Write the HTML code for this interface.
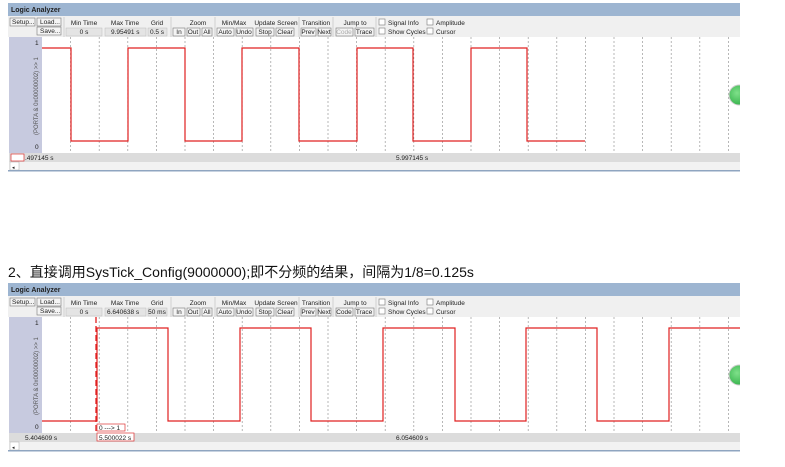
<!DOCTYPE html>
<html><head><meta charset="utf-8"><style>
body{margin:0;background:#fff;width:785px;height:467px;overflow:hidden}
svg{position:absolute;left:0;top:0}
text{font-family:"Liberation Sans",sans-serif;font-size:6.5px;fill:#222}
.h{text-anchor:middle}
.cn{font-family:"Liberation Sans","Noto Sans CJK SC",sans-serif;font-size:14px;fill:#111}
</style></head><body>
<svg width="785" height="467" viewBox="0 0 785 467">
<defs>
<g id="tb">
<rect x="8" y="3" width="732" height="168" fill="#fff"/>
<rect x="8" y="3" width="732" height="13" fill="#9db5d1"/>
<text x="11" y="12" style="font-weight:bold;font-size:7px">Logic Analyzer</text>
<rect x="8" y="16" width="732" height="21" fill="#f0f0f0"/>
<g fill="#f4f4f4" stroke="#777" stroke-width="0.6">
<rect x="10" y="18" width="25" height="8"/><rect x="37" y="18" width="24" height="8"/><rect x="37" y="27" width="24" height="8"/>
<rect x="173" y="28" width="12" height="8"/><rect x="187" y="28" width="13" height="8"/><rect x="202" y="28" width="10" height="8"/>
<rect x="217" y="28" width="17" height="8"/><rect x="236" y="28" width="17" height="8"/>
<rect x="256" y="28" width="18" height="8"/><rect x="276" y="28" width="18" height="8"/>
<rect x="301" y="28" width="15" height="8"/><rect x="318" y="28" width="13" height="8"/>
<rect x="336" y="28" width="17" height="8"/><rect x="355" y="28" width="19" height="8"/>
<rect x="379" y="19" width="6" height="6" fill="#fff"/><rect x="379" y="28" width="6" height="6" fill="#fff"/>
<rect x="427" y="19" width="6" height="6" fill="#fff"/><rect x="427" y="28" width="6" height="6" fill="#fff"/>
</g>
<g fill="#e4e4e4" stroke="#bbb" stroke-width="0.5">
<rect x="66" y="28" width="36" height="8"/><rect x="105" y="28" width="41" height="8"/><rect x="148" y="28" width="19" height="8"/>
</g>
<g stroke="#bbb" stroke-width="0.6"><line x1="64" y1="17" x2="64" y2="37"/><line x1="171" y1="17" x2="171" y2="37"/><line x1="215" y1="17" x2="215" y2="37"/><line x1="299" y1="17" x2="299" y2="37"/><line x1="333" y1="17" x2="333" y2="37"/><line x1="376" y1="17" x2="376" y2="37"/></g>
<text x="12" y="24">Setup...</text><text x="40" y="24">Load...</text><text x="40" y="33">Save...</text>
<text class="h" x="84" y="25">Min Time</text><text class="h" x="125" y="25">Max Time</text><text class="h" x="157" y="25">Grid</text>
<text class="h" x="198" y="25">Zoom</text><text class="h" x="234" y="25">Min/Max</text><text class="h" x="276" y="25">Update Screen</text>
<text class="h" x="316" y="25">Transition</text><text class="h" x="355" y="25">Jump to</text>
<text class="h" x="84" y="34">0 s</text>
<text class="h" x="179" y="34">In</text><text class="h" x="193" y="34">Out</text><text class="h" x="207" y="34">All</text>
<text class="h" x="225" y="34">Auto</text><text class="h" x="244" y="34">Undo</text><text class="h" x="265" y="34">Stop</text><text class="h" x="285" y="34">Clear</text>
<text class="h" x="308" y="34">Prev</text><text class="h" x="324" y="34">Next</text><text class="h" x="364" y="34">Trace</text>
<text x="388" y="25">Signal Info</text><text x="388" y="34">Show Cycles</text><text x="436" y="25">Amplitude</text><text x="436" y="34">Cursor</text>
<rect x="9" y="37" width="33" height="116" fill="#c7cadf"/>
<text x="35" y="45">1</text><text x="35" y="149">0</text>
<text transform="translate(38,135) rotate(-90)" style="font-size:6px;fill:#555">(PORTA &amp; 0x00000002) &gt;&gt; 1</text>
<g stroke="#999" stroke-width="0.7" stroke-dasharray="2,2">
<line x1="70.6" y1="37" x2="70.6" y2="153"/><line x1="99.2" y1="37" x2="99.2" y2="153"/><line x1="127.8" y1="37" x2="127.8" y2="153"/><line x1="156.4" y1="37" x2="156.4" y2="153"/><line x1="185" y1="37" x2="185" y2="153"/><line x1="213.6" y1="37" x2="213.6" y2="153"/><line x1="242.2" y1="37" x2="242.2" y2="153"/><line x1="270.8" y1="37" x2="270.8" y2="153"/><line x1="299.4" y1="37" x2="299.4" y2="153"/><line x1="328" y1="37" x2="328" y2="153"/><line x1="356.6" y1="37" x2="356.6" y2="153"/><line x1="385.2" y1="37" x2="385.2" y2="153"/><line x1="413.8" y1="37" x2="413.8" y2="153"/><line x1="442.4" y1="37" x2="442.4" y2="153"/><line x1="471" y1="37" x2="471" y2="153"/><line x1="499.6" y1="37" x2="499.6" y2="153"/><line x1="528.2" y1="37" x2="528.2" y2="153"/><line x1="556.8" y1="37" x2="556.8" y2="153"/><line x1="585.4" y1="37" x2="585.4" y2="153"/><line x1="614" y1="37" x2="614" y2="153"/><line x1="642.6" y1="37" x2="642.6" y2="153"/><line x1="671.2" y1="37" x2="671.2" y2="153"/><line x1="699.8" y1="37" x2="699.8" y2="153"/><line x1="728.4" y1="37" x2="728.4" y2="153"/>
</g>
<rect x="9" y="153" width="731" height="9" fill="#dcdcdc"/>
<rect x="9" y="162" width="731" height="8" fill="#f2f2f2"/>
<rect x="10" y="162" width="9" height="8" fill="#fff" stroke="#aaa" stroke-width="0.5"/>
<text x="12" y="169" style="font-size:5px">◂</text>
<rect x="8" y="170" width="732" height="1.5" fill="#8fa5c0"/>
</g>
<radialGradient id="gr" cx="0.4" cy="0.4" r="0.7"><stop offset="0" stop-color="#7fe08a"/><stop offset="1" stop-color="#2fae45"/></radialGradient>
</defs>

<!-- panel 1 -->
<use href="#tb"/>
<text x="111" y="34" >9.95491 s</text><text class="h" x="157" y="34">0.5 s</text>
<text class="h" x="344" y="34" style="fill:#aaa">Code</text>
<path d="M42 48H71V141H128V48H185V141H242V48H299V141H357V48H413V141H471V48H527V141H585" fill="none" stroke="#e02020" stroke-width="1.2"/>
<rect x="11" y="154" width="13" height="7" fill="#fff" stroke="#d33" stroke-width="0.7"/>
<text x="25" y="160">.497145 s</text><text x="396" y="160">5.997145 s</text>
<circle cx="739" cy="95" r="10" fill="url(#gr)" stroke="#ccc"/>
<rect x="740" y="80" width="45" height="30" fill="#fff"/>

<text class="cn" x="8" y="277">2、直接调用SysTick_Config(9000000);即不分频的结果，间隔为1/8=0.125s</text>

<!-- panel 2 -->
<g transform="translate(0,280)">
<use href="#tb"/>
<text x="107" y="34">6.640638 s</text><text class="h" x="157" y="34">50 ms</text>
<text class="h" x="344" y="34">Code</text>
<path d="M42 141H97V48H168V141H240V48H311V141H383V48H455V141H526V48H597V141H669V48H740" fill="none" stroke="#e02020" stroke-width="1.2"/>
<line x1="96" y1="37" x2="96" y2="153" stroke="#e02020" stroke-width="1.3" stroke-dasharray="6,3"/>
<rect x="97" y="144" width="28" height="7" fill="#fff" stroke="#d33" stroke-width="0.7"/>
<text x="99" y="150">0 ---&gt; 1</text>
<text x="25" y="160">5.404609 s</text>
<rect x="97" y="153" width="37" height="8" fill="#fff" stroke="#d33" stroke-width="0.7"/>
<text x="99" y="160">5.500022 s</text>
<text x="396" y="160">6.054609 s</text>
<circle cx="739" cy="95" r="10" fill="url(#gr)" stroke="#ccc"/>
<rect x="740" y="80" width="45" height="30" fill="#fff"/>
</g>
</svg>
</body></html>
